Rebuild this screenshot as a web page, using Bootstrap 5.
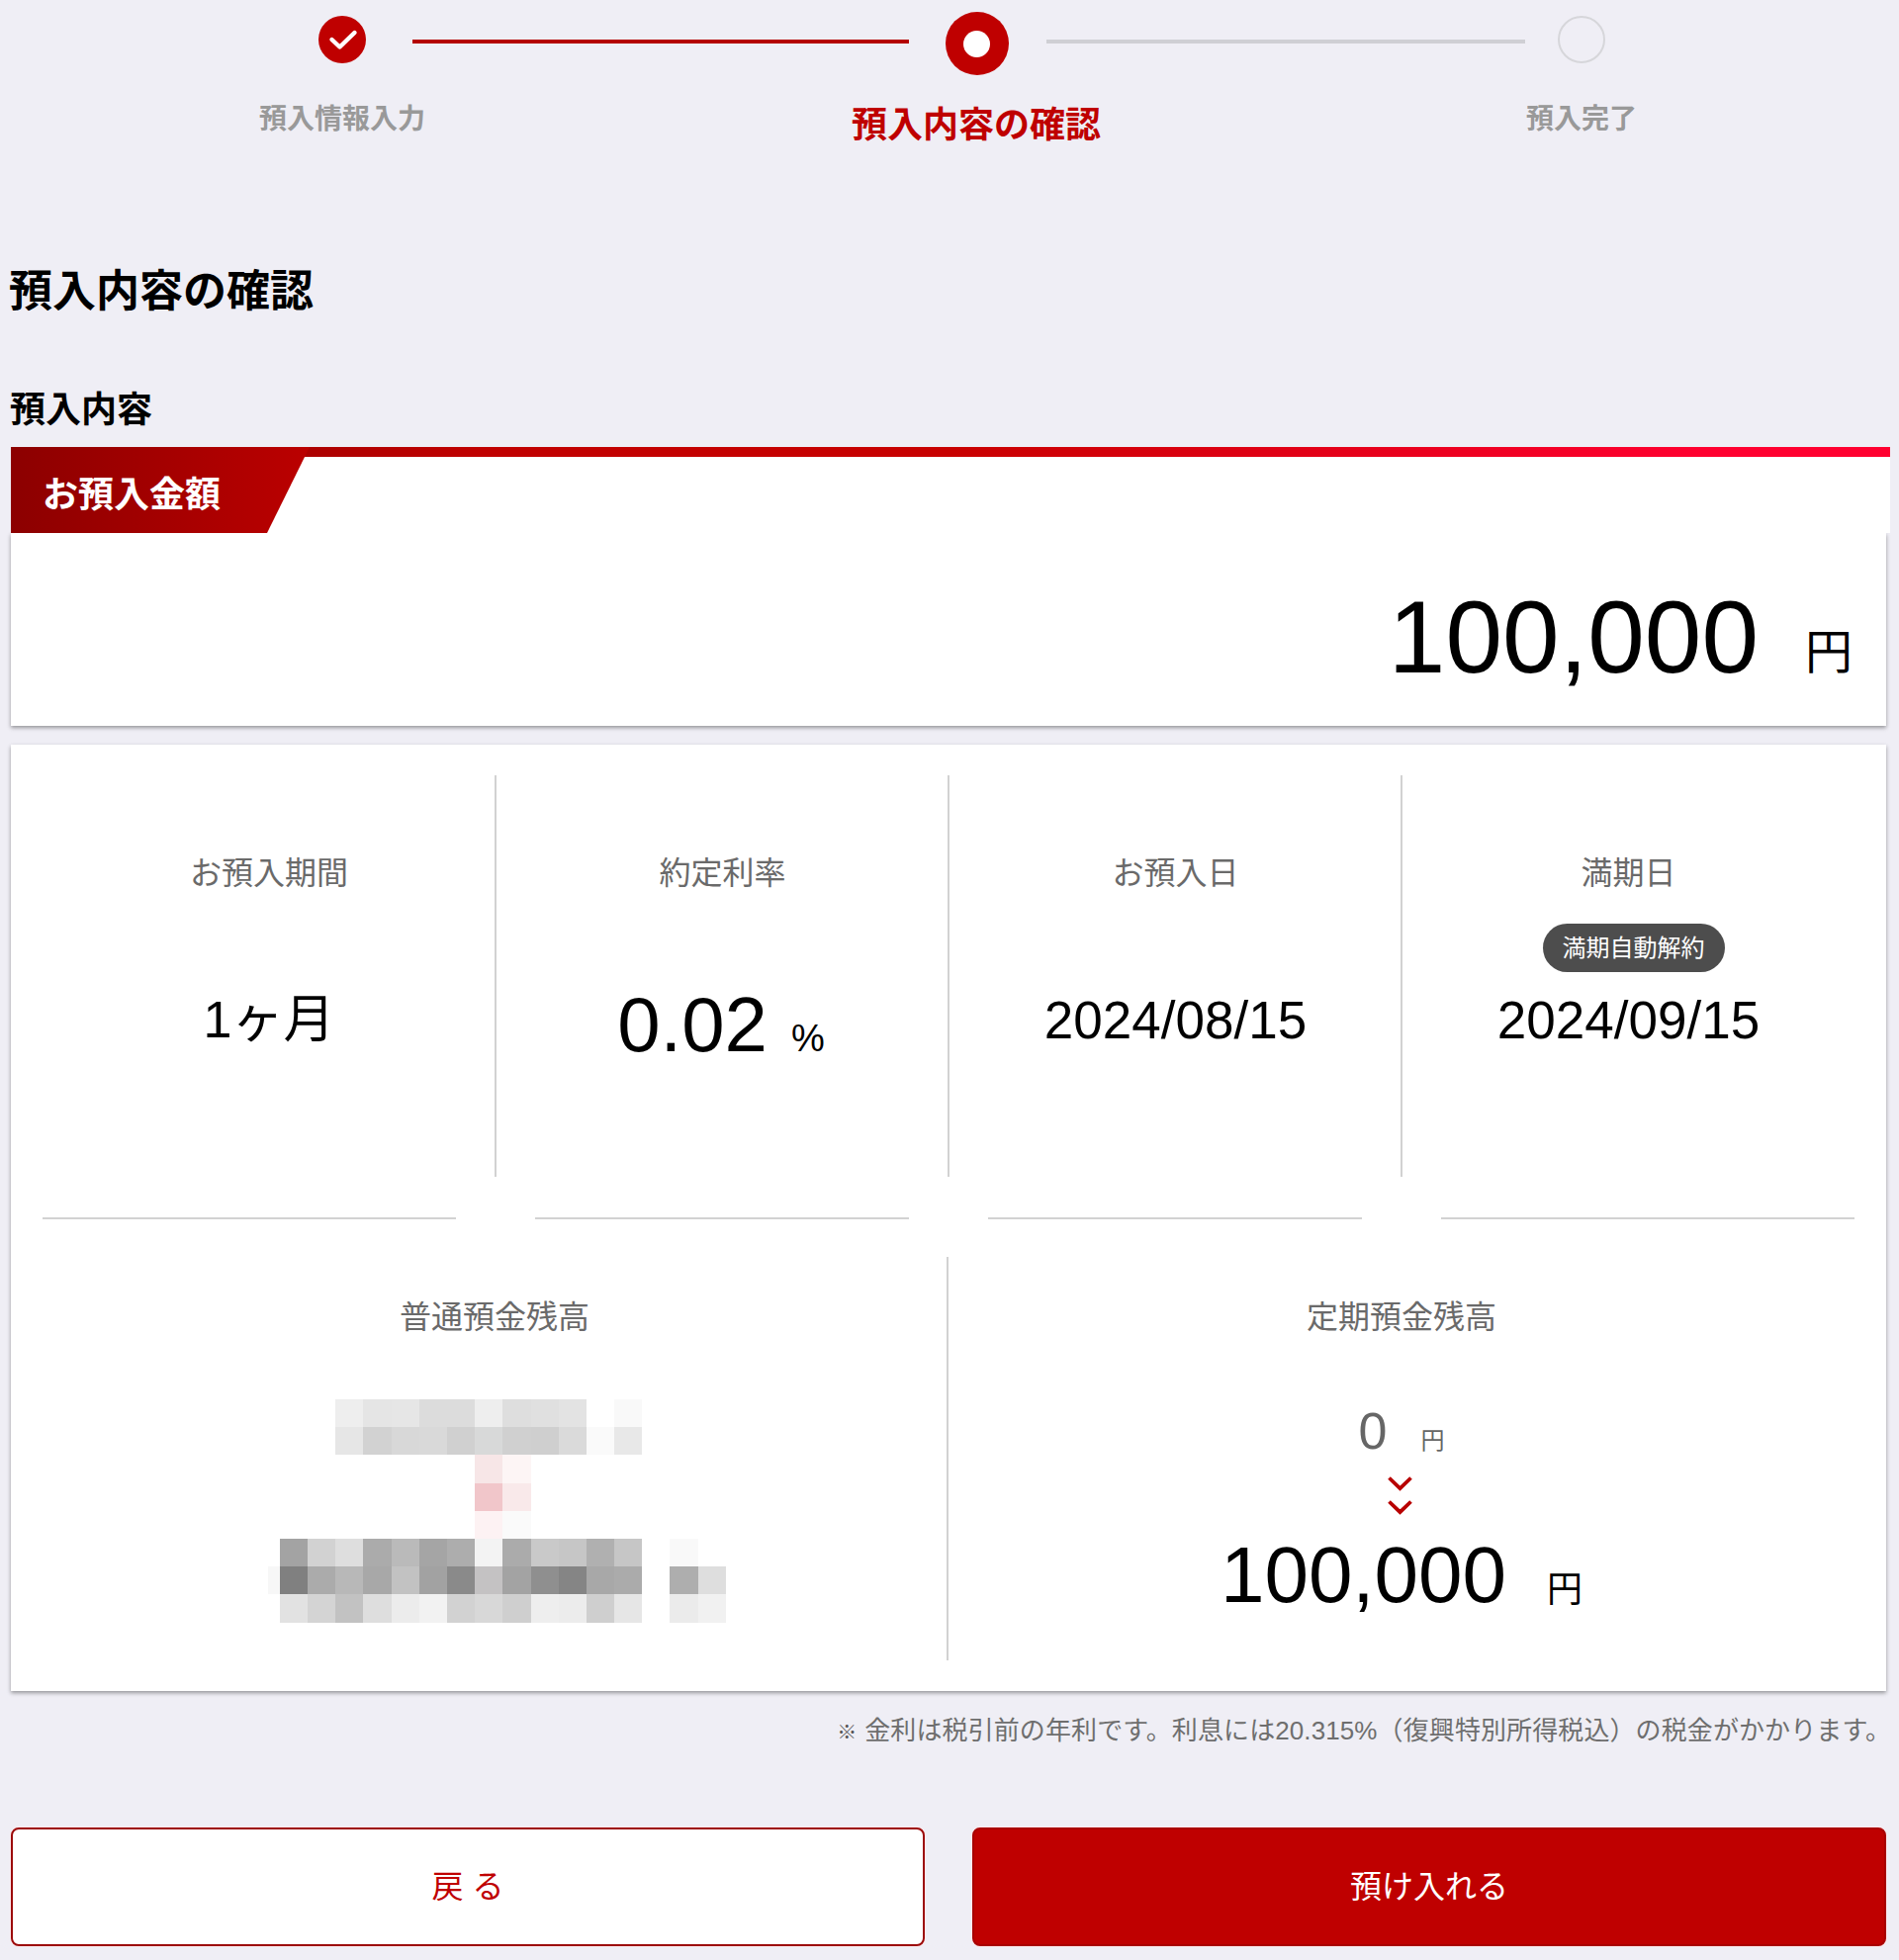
<!DOCTYPE html>
<html lang="ja">
<head>
<meta charset="utf-8">
<title>預入内容の確認</title>
<link href="https://cdn.jsdelivr.net/npm/bootstrap@5.3.0/dist/css/bootstrap.min.css" rel="stylesheet">
<style>
html,body{margin:0;background:#efeef5}
body{font-family:"Liberation Sans","Noto Sans CJK JP",sans-serif;color:#000;width:1920px;height:1982px;overflow-x:hidden}
.pg{padding:0 9px 13px 11px}
.stp-icons{padding:12px 0 0 311px;align-items:flex-start}
.stp-c{width:48px;height:48px;border-radius:50%;margin-top:4px;flex:none}
.stp-done{background:#bf0000}
.stp-cur{width:64px;height:64px;margin:0 38.5px 0 36.5px;background:#bf0000}
.stp-todo{border:2px solid #d6d6da;margin-left:33px}
.stp-l1{width:502px;height:4px;margin:28px 0 0 47px;background:#b40000;flex:none}
.stp-l2{width:484px;height:4px;margin-top:28px;background:#cfcfd4;flex:none}
.stp-labels{margin-top:24px;height:54px}
.stp-t{font-weight:700;font-size:28px;line-height:42px;color:#999;text-align:center;width:400px;flex:none}
.stp-t.a{margin-left:135px}
.stp-t.b{margin-left:241px;font-size:36px;line-height:54px;color:#bf0000}
.stp-t.c{margin-left:212px}
.ttl{font-size:44px;line-height:66px;font-weight:700;margin:108px 0 0 -2px}
.sub{font-size:36px;line-height:54px;font-weight:700;margin:60px 0 0 -1px}
.amt-head{height:87px;background:#fff;margin-top:10px}
.amt-bar{height:10px;background:linear-gradient(90deg,#8a0000 0,#c00000 25%,#c80000 50%,#ff0030 90%)}
.amt-tag{top:0;left:0;width:302px;height:87px;padding:11px 0 0 32px;clip-path:polygon(0 0,100% 0,259px 100%,0 100%);background:linear-gradient(90deg,#8c0000,#bb0000);color:#fff;font-size:36px;font-weight:700}
.amt-body{margin-right:4px;height:195px;padding:53px 34px 0 0;box-shadow:0 2px 4px rgba(0,0,0,.38);background:#fff}
.amt-n{font-size:103.5px;line-height:104px}
.amt-y{font-size:48px;line-height:48px;margin:44px 0 0 47px}
.info{margin:19px 4px 0 0;padding:31px 32px;box-shadow:0 2px 4px rgba(0,0,0,.38);background:#fff}
.info-top{height:406px}
.cell{height:100%;text-align:center;padding-top:75px}
.cell-b{border-left:2px solid #d2d2d2;margin-left:-1px}
.lab{font-size:32px;line-height:48px;color:#6a6a6a}
.slot{height:49px;margin-top:27px}
.pill{height:49px;width:184px;margin-left:10px;padding:0;background:#4d4d4d;color:#fff;font-size:24px;font-weight:400;line-height:49px;border-radius:25px}
.val{font-size:53px;line-height:54px;margin-top:22px}
.val-m{font-size:52px;margin-top:21px}
.val-r{font-size:78px;line-height:54px;margin-top:26px}
.val-r span{font-size:38px;margin:0 3px 0 24px}
.seps{height:81px;align-items:center;padding-top:2px}
.sep{border-top:2px solid #d2d2d2}
.sep-a{margin-right:40px}
.sep-b{margin:0 40px}
.sep-c{margin-left:40px}
.info-bot{height:408px}
.cell2{height:100%;text-align:center;padding-top:37px}
.cell2-b{border-right:2px solid #d2d2d2}
.mosaic{display:block;margin:59px auto 0}
.bal0{margin-top:65px;color:#666;align-items:baseline}
.bal0 b{font-weight:400;font-size:52px;line-height:52px}
.bal0 i{font-style:normal;font-size:24px;line-height:24px;margin-left:34px}
.chev{display:block;margin:20px auto 0;transform:translateX(-2px)}
.bal1{margin-top:21px;align-items:baseline}
.bal1 b{font-weight:400;font-size:80px;line-height:80px}
.bal1 i{font-style:normal;font-size:36px;line-height:36px;margin-left:41px}
.note{margin:21px -1px 0 0;text-align:right;font-size:26px;line-height:39px;color:#6e6e6e;letter-spacing:.1px}
.note small{font-size:20px;margin-right:8px;color:#555}
.acts{margin:76px 4px 0 0;gap:48px}
.bk{flex:1 1 0;height:120px;border-radius:8px;font-size:32px;line-height:1;box-shadow:0 0 0 1px #fbe7eb}
.bk-o{background:#fff;color:#bf0000;border:2px solid #9c0a0a}
.bk-f{background:#bf0000;color:#fff;border:2px solid #a80000}
</style>
</head>
<body>
<div class="pg">
  <div class="d-flex stp-icons">
    <div class="stp-c stp-done d-flex align-items-center justify-content-center">
      <svg width="48" height="48" viewBox="0 0 48 48"><path d="M13.5 24l8 7.5L36.5 17" fill="none" stroke="#fff" stroke-width="4.4" stroke-linecap="round" stroke-linejoin="round"/></svg>
    </div>
    <div class="stp-l1"></div>
    <div class="stp-c stp-cur d-flex align-items-center justify-content-center">
      <svg width="27" height="27" viewBox="0 0 27 27"><circle cx="13.5" cy="13.5" r="13.5" fill="#fff"/></svg>
    </div>
    <div class="stp-l2"></div>
    <div class="stp-c stp-todo"></div>
  </div>
  <div class="d-flex stp-labels">
    <div class="stp-t a">預入情報入力</div>
    <div class="stp-t b">預入内容の確認</div>
    <div class="stp-t c">預入完了</div>
  </div>
  <h1 class="ttl">預入内容の確認</h1>
  <h2 class="sub">預入内容</h2>

  <div class="amt-head position-relative">
    <div class="amt-bar"></div>
    <div class="amt-tag position-absolute d-flex align-items-center">お預入金額</div>
  </div>
  <div class="amt-body d-flex justify-content-end align-items-start">
    <span class="amt-n">100,000</span><span class="amt-y">円</span>
  </div>

  <div class="info card border-0 rounded-0">
    <div class="row g-0 info-top">
      <div class="col-3"><div class="cell">
        <div class="lab">お預入期間</div><div class="slot"></div>
        <div class="val val-m">1ヶ月</div>
      </div></div>
      <div class="col-3"><div class="cell cell-b">
        <div class="lab">約定利率</div><div class="slot"></div>
        <div class="val-r">0.02<span>%</span></div>
      </div></div>
      <div class="col-3"><div class="cell cell-b">
        <div class="lab">お預入日</div><div class="slot"></div>
        <div class="val">2024/08/15</div>
      </div></div>
      <div class="col-3"><div class="cell cell-b">
        <div class="lab">満期日</div>
        <div class="slot"><span class="badge pill">満期自動解約</span></div>
        <div class="val">2024/09/15</div>
      </div></div>
    </div>
    <div class="row g-0 seps">
      <div class="col-3"><div class="sep sep-a"></div></div>
      <div class="col-3"><div class="sep sep-b"></div></div>
      <div class="col-3"><div class="sep sep-b"></div></div>
      <div class="col-3"><div class="sep sep-c"></div></div>
    </div>
    <div class="row g-0 info-bot">
      <div class="col-6"><div class="cell2 cell2-b">
        <div class="lab">普通預金残高</div>
        <svg class="mosaic" width="470" height="226" viewBox="-17.7 0 470 226" shape-rendering="crispEdges" aria-hidden="true">
          <rect x="-12" y="169" width="12" height="28" fill="#f7f7f7"/>
          <g>
            <rect x="56.4" y="0" width="28.2" height="28.2" fill="#eeeeee"/><rect x="84.6" y="0" width="28.2" height="28.2" fill="#e5e5e5"/><rect x="112.8" y="0" width="28.2" height="28.2" fill="#e6e6e6"/><rect x="141" y="0" width="28.2" height="28.2" fill="#dcdcdc"/><rect x="169.2" y="0" width="28.2" height="28.2" fill="#dcdcdc"/><rect x="197.4" y="0" width="28.2" height="28.2" fill="#eeeeee"/><rect x="225.6" y="0" width="28.2" height="28.2" fill="#dedede"/><rect x="253.8" y="0" width="28.2" height="28.2" fill="#e0e0e0"/><rect x="282" y="0" width="28.2" height="28.2" fill="#e3e3e3"/><rect x="338.4" y="0" width="28.2" height="28.2" fill="#f9f9f9"/>
            <rect x="56.4" y="28.2" width="28.2" height="28.2" fill="#e6e6e6"/><rect x="84.6" y="28.2" width="28.2" height="28.2" fill="#d2d2d2"/><rect x="112.8" y="28.2" width="28.2" height="28.2" fill="#d8d8d8"/><rect x="141" y="28.2" width="28.2" height="28.2" fill="#d9d9d9"/><rect x="169.2" y="28.2" width="28.2" height="28.2" fill="#d0d0d0"/><rect x="197.4" y="28.2" width="28.2" height="28.2" fill="#d8d9d9"/><rect x="225.6" y="28.2" width="28.2" height="28.2" fill="#d0d0d0"/><rect x="253.8" y="28.2" width="28.2" height="28.2" fill="#cfcfcf"/><rect x="282" y="28.2" width="28.2" height="28.2" fill="#dadada"/><rect x="310.2" y="28.2" width="28.2" height="28.2" fill="#fafafa"/><rect x="338.4" y="28.2" width="28.2" height="28.2" fill="#e8e8e8"/>
            <rect x="197.4" y="56.4" width="28.2" height="28.2" fill="#f7e6e7"/><rect x="225.6" y="56.4" width="28.2" height="28.2" fill="#fdf5f5"/>
            <rect x="197.4" y="84.6" width="28.2" height="28.2" fill="#f1c6ca"/><rect x="225.6" y="84.6" width="28.2" height="28.2" fill="#f9e9ea"/>
            <rect x="197.4" y="112.8" width="28.2" height="28.2" fill="#fdf2f3"/><rect x="225.6" y="112.8" width="28.2" height="28.2" fill="#fafafa"/>
            <rect x="0" y="141" width="28.2" height="28.2" fill="#a3a3a3"/><rect x="28.2" y="141" width="28.2" height="28.2" fill="#d2d2d2"/><rect x="56.4" y="141" width="28.2" height="28.2" fill="#dedede"/><rect x="84.6" y="141" width="28.2" height="28.2" fill="#ababab"/><rect x="112.8" y="141" width="28.2" height="28.2" fill="#bababa"/><rect x="141" y="141" width="28.2" height="28.2" fill="#a5a5a5"/><rect x="169.2" y="141" width="28.2" height="28.2" fill="#adadad"/><rect x="197.4" y="141" width="28.2" height="28.2" fill="#f3f3f3"/><rect x="225.6" y="141" width="28.2" height="28.2" fill="#ababab"/><rect x="253.8" y="141" width="28.2" height="28.2" fill="#c9c9c9"/><rect x="282" y="141" width="28.2" height="28.2" fill="#c6c6c6"/><rect x="310.2" y="141" width="28.2" height="28.2" fill="#b0b0b0"/><rect x="338.4" y="141" width="28.2" height="28.2" fill="#c6c6c6"/><rect x="394.8" y="141" width="28.2" height="28.2" fill="#f9f9f9"/>
            <rect x="0" y="169.2" width="28.2" height="28.2" fill="#808080"/><rect x="28.2" y="169.2" width="28.2" height="28.2" fill="#ababab"/><rect x="56.4" y="169.2" width="28.2" height="28.2" fill="#b8b8b8"/><rect x="84.6" y="169.2" width="28.2" height="28.2" fill="#a8a8a8"/><rect x="112.8" y="169.2" width="28.2" height="28.2" fill="#c2c2c2"/><rect x="141" y="169.2" width="28.2" height="28.2" fill="#a2a2a2"/><rect x="169.2" y="169.2" width="28.2" height="28.2" fill="#8a8a8a"/><rect x="197.4" y="169.2" width="28.2" height="28.2" fill="#c4c2c3"/><rect x="225.6" y="169.2" width="28.2" height="28.2" fill="#a3a3a3"/><rect x="253.8" y="169.2" width="28.2" height="28.2" fill="#8f8f8f"/><rect x="282" y="169.2" width="28.2" height="28.2" fill="#858585"/><rect x="310.2" y="169.2" width="28.2" height="28.2" fill="#a8a8a8"/><rect x="338.4" y="169.2" width="28.2" height="28.2" fill="#ababab"/><rect x="394.8" y="169.2" width="28.2" height="28.2" fill="#aeaeae"/><rect x="423" y="169.2" width="28.2" height="28.2" fill="#dedede"/>
            <rect x="0" y="197.4" width="28.2" height="28.2" fill="#e2e2e2"/><rect x="28.2" y="197.4" width="28.2" height="28.2" fill="#d4d4d4"/><rect x="56.4" y="197.4" width="28.2" height="28.2" fill="#c2c2c2"/><rect x="84.6" y="197.4" width="28.2" height="28.2" fill="#dedede"/><rect x="112.8" y="197.4" width="28.2" height="28.2" fill="#ececec"/><rect x="141" y="197.4" width="28.2" height="28.2" fill="#f2f2f2"/><rect x="169.2" y="197.4" width="28.2" height="28.2" fill="#d2d2d2"/><rect x="197.4" y="197.4" width="28.2" height="28.2" fill="#d8d8d8"/><rect x="225.6" y="197.4" width="28.2" height="28.2" fill="#cfcfcf"/><rect x="253.8" y="197.4" width="28.2" height="28.2" fill="#eeeeee"/><rect x="282" y="197.4" width="28.2" height="28.2" fill="#ececec"/><rect x="310.2" y="197.4" width="28.2" height="28.2" fill="#cfcfcf"/><rect x="338.4" y="197.4" width="28.2" height="28.2" fill="#e6e6e6"/><rect x="394.8" y="197.4" width="28.2" height="28.2" fill="#ebebeb"/><rect x="423" y="197.4" width="28.2" height="28.2" fill="#f1f1f1"/>
          </g>
        </svg>
      </div></div>
      <div class="col-6"><div class="cell2">
        <div class="lab">定期預金残高</div>
        <div class="d-flex justify-content-center bal0"><b>0</b><i>円</i></div>
        <svg class="chev" width="25" height="39" viewBox="0 0 25 39" aria-hidden="true"><path d="M1.5 1.5L12.5 12 23.5 1.5M1.5 25.5L12.5 36 23.5 25.5" fill="none" stroke="#b80000" stroke-width="3.8"/></svg>
        <div class="d-flex justify-content-center bal1"><b>100,000</b><i>円</i></div>
      </div></div>
    </div>
  </div>

  <p class="note"><small>※</small>金利は税引前の年利です。利息には20.315%（復興特別所得税込）の税金がかかります。</p>

  <div class="d-flex acts">
    <button type="button" class="btn bk bk-o">戻 る</button>
    <button type="button" class="btn bk bk-f">預け入れる</button>
  </div>
</div>
<script src="https://cdn.jsdelivr.net/npm/bootstrap@5.3.0/dist/js/bootstrap.bundle.min.js"></script>
</body>
</html>
